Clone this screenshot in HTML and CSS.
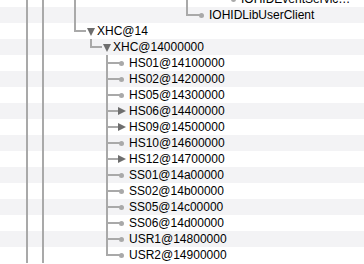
FILE: index.html
```html
<!DOCTYPE html>
<html>
<head>
    <link rel="stylesheet" href="styles.css">
</head>
<body>
    <div class="tree">
        <div class="row">
            <span class="g pipe"></span><span class="g pipe"></span><span class="g"></span><span class="g pipe"></span>
            <span class="g"></span><span class="g"></span><span class="g"></span><span class="g"></span><span class="g"></span><span class="g"></span>
            <span class="g pipe"></span><span class="g"></span><span class="g ell"></span>
            <span class="icon leaf"><i class="stub"></i><i class="dot"></i></span>
            <span class="label clip">IOHIDEventServiceUserClient</span>
        </div>
        <div class="row">
            <span class="g pipe"></span><span class="g pipe"></span><span class="g"></span><span class="g pipe"></span>
            <span class="g"></span><span class="g"></span><span class="g"></span><span class="g"></span><span class="g"></span><span class="g"></span>
            <span class="g ell"></span>
            <span class="icon leaf"><i class="stub"></i><i class="dot"></i></span>
            <span class="label">IOHIDLibUserClient</span>
        </div>
        <div class="row">
            <span class="g pipe"></span><span class="g pipe"></span><span class="g"></span><span class="g ell"></span>
            <span class="icon"><i class="stub short"></i><i class="tri-open"></i></span>
            <span class="label">XHC@14</span>
        </div>
        <div class="row">
            <span class="g pipe"></span><span class="g pipe"></span><span class="g"></span><span class="g"></span><span class="g ell"></span>
            <span class="icon"><i class="stub short"></i><i class="tri-open"></i></span>
            <span class="label">XHC@14000000</span>
        </div>
        <div class="row">
            <span class="g pipe"></span><span class="g pipe"></span><span class="g"></span><span class="g"></span><span class="g"></span><span class="g tee"></span>
            <span class="icon leaf"><i class="stub"></i><i class="dot"></i></span>
            <span class="label">HS01@14100000</span>
        </div>
        <div class="row">
            <span class="g pipe"></span><span class="g pipe"></span><span class="g"></span><span class="g"></span><span class="g"></span><span class="g tee"></span>
            <span class="icon leaf"><i class="stub"></i><i class="dot"></i></span>
            <span class="label">HS02@14200000</span>
        </div>
        <div class="row">
            <span class="g pipe"></span><span class="g pipe"></span><span class="g"></span><span class="g"></span><span class="g"></span><span class="g tee"></span>
            <span class="icon leaf"><i class="stub"></i><i class="dot"></i></span>
            <span class="label">HS05@14300000</span>
        </div>
        <div class="row">
            <span class="g pipe"></span><span class="g pipe"></span><span class="g"></span><span class="g"></span><span class="g"></span><span class="g tee"></span>
            <span class="icon"><i class="stub short"></i><i class="tri-closed"></i></span>
            <span class="label">HS06@14400000</span>
        </div>
        <div class="row">
            <span class="g pipe"></span><span class="g pipe"></span><span class="g"></span><span class="g"></span><span class="g"></span><span class="g tee"></span>
            <span class="icon"><i class="stub short"></i><i class="tri-closed"></i></span>
            <span class="label">HS09@14500000</span>
        </div>
        <div class="row">
            <span class="g pipe"></span><span class="g pipe"></span><span class="g"></span><span class="g"></span><span class="g"></span><span class="g tee"></span>
            <span class="icon leaf"><i class="stub"></i><i class="dot"></i></span>
            <span class="label">HS10@14600000</span>
        </div>
        <div class="row">
            <span class="g pipe"></span><span class="g pipe"></span><span class="g"></span><span class="g"></span><span class="g"></span><span class="g tee"></span>
            <span class="icon"><i class="stub short"></i><i class="tri-closed"></i></span>
            <span class="label">HS12@14700000</span>
        </div>
        <div class="row">
            <span class="g pipe"></span><span class="g pipe"></span><span class="g"></span><span class="g"></span><span class="g"></span><span class="g tee"></span>
            <span class="icon leaf"><i class="stub"></i><i class="dot"></i></span>
            <span class="label">SS01@14a00000</span>
        </div>
        <div class="row">
            <span class="g pipe"></span><span class="g pipe"></span><span class="g"></span><span class="g"></span><span class="g"></span><span class="g tee"></span>
            <span class="icon leaf"><i class="stub"></i><i class="dot"></i></span>
            <span class="label">SS02@14b00000</span>
        </div>
        <div class="row">
            <span class="g pipe"></span><span class="g pipe"></span><span class="g"></span><span class="g"></span><span class="g"></span><span class="g tee"></span>
            <span class="icon leaf"><i class="stub"></i><i class="dot"></i></span>
            <span class="label">SS05@14c00000</span>
        </div>
        <div class="row">
            <span class="g pipe"></span><span class="g pipe"></span><span class="g"></span><span class="g"></span><span class="g"></span><span class="g tee"></span>
            <span class="icon leaf"><i class="stub"></i><i class="dot"></i></span>
            <span class="label">SS06@14d00000</span>
        </div>
        <div class="row">
            <span class="g pipe"></span><span class="g pipe"></span><span class="g"></span><span class="g"></span><span class="g"></span><span class="g tee"></span>
            <span class="icon leaf"><i class="stub"></i><i class="dot"></i></span>
            <span class="label">USR1@14800000</span>
        </div>
        <div class="row">
            <span class="g pipe"></span><span class="g pipe"></span><span class="g"></span><span class="g"></span><span class="g"></span><span class="g ell"></span>
            <span class="icon leaf"><i class="stub"></i><i class="dot"></i></span>
            <span class="label">USR2@14900000</span>
        </div>
    </div>
</body>
</html>
```

FILE: styles.css
```css
body {
    margin: 0;
    background: #fff;
    font-family: "Liberation Sans", Arial, sans-serif;
    font-size: 12px;
    color: #000;
    overflow: hidden;
}
.tree {
    margin-top: -9px;
}
.row {
    display: flex;
    align-items: center;
    height: 16px;
    padding-left: 18px;
    white-space: nowrap;
}
.row:nth-child(even) {
    background: #f3f3f5;
}
.g {
    width: 16px;
    height: 16px;
    flex-shrink: 0;
}
.pipe {
    background: linear-gradient(#a9a9a9, #a9a9a9) 8px 0 / 2px 100% no-repeat;
}
.tee {
    background:
        linear-gradient(#a9a9a9, #a9a9a9) 8px 0 / 2px 100% no-repeat,
        linear-gradient(#a9a9a9, #a9a9a9) 8px 7px / 8px 2px no-repeat;
}
.ell {
    background:
        linear-gradient(#a9a9a9, #a9a9a9) 8px 0 / 2px 9px no-repeat,
        linear-gradient(#a9a9a9, #a9a9a9) 8px 7px / 8px 2px no-repeat;
}
.icon {
    width: 16px;
    height: 16px;
    flex-shrink: 0;
    display: flex;
    align-items: center;
}
.stub {
    width: 6px;
    height: 2px;
    background: #a9a9a9;
}
.stub.short {
    width: 4px;
}
.dot {
    width: 5px;
    height: 5px;
    border-radius: 50%;
    background: #a9a9a9;
    margin-left: -1px;
}
.tri-open {
    width: 0;
    height: 0;
    margin-left: 1px;
    margin-top: 1px;
    border-left: 4.5px solid transparent;
    border-right: 4.5px solid transparent;
    border-top: 8px solid #6e6e6e;
}
.tri-closed {
    width: 0;
    height: 0;
    border-top: 4.5px solid transparent;
    border-bottom: 4.5px solid transparent;
    border-left: 8px solid #6e6e6e;
}
.label {
    margin-left: -1px;
    line-height: 16px;
}
.clip {
    width: 114px;
    overflow: hidden;
    text-overflow: ellipsis;
}
```
